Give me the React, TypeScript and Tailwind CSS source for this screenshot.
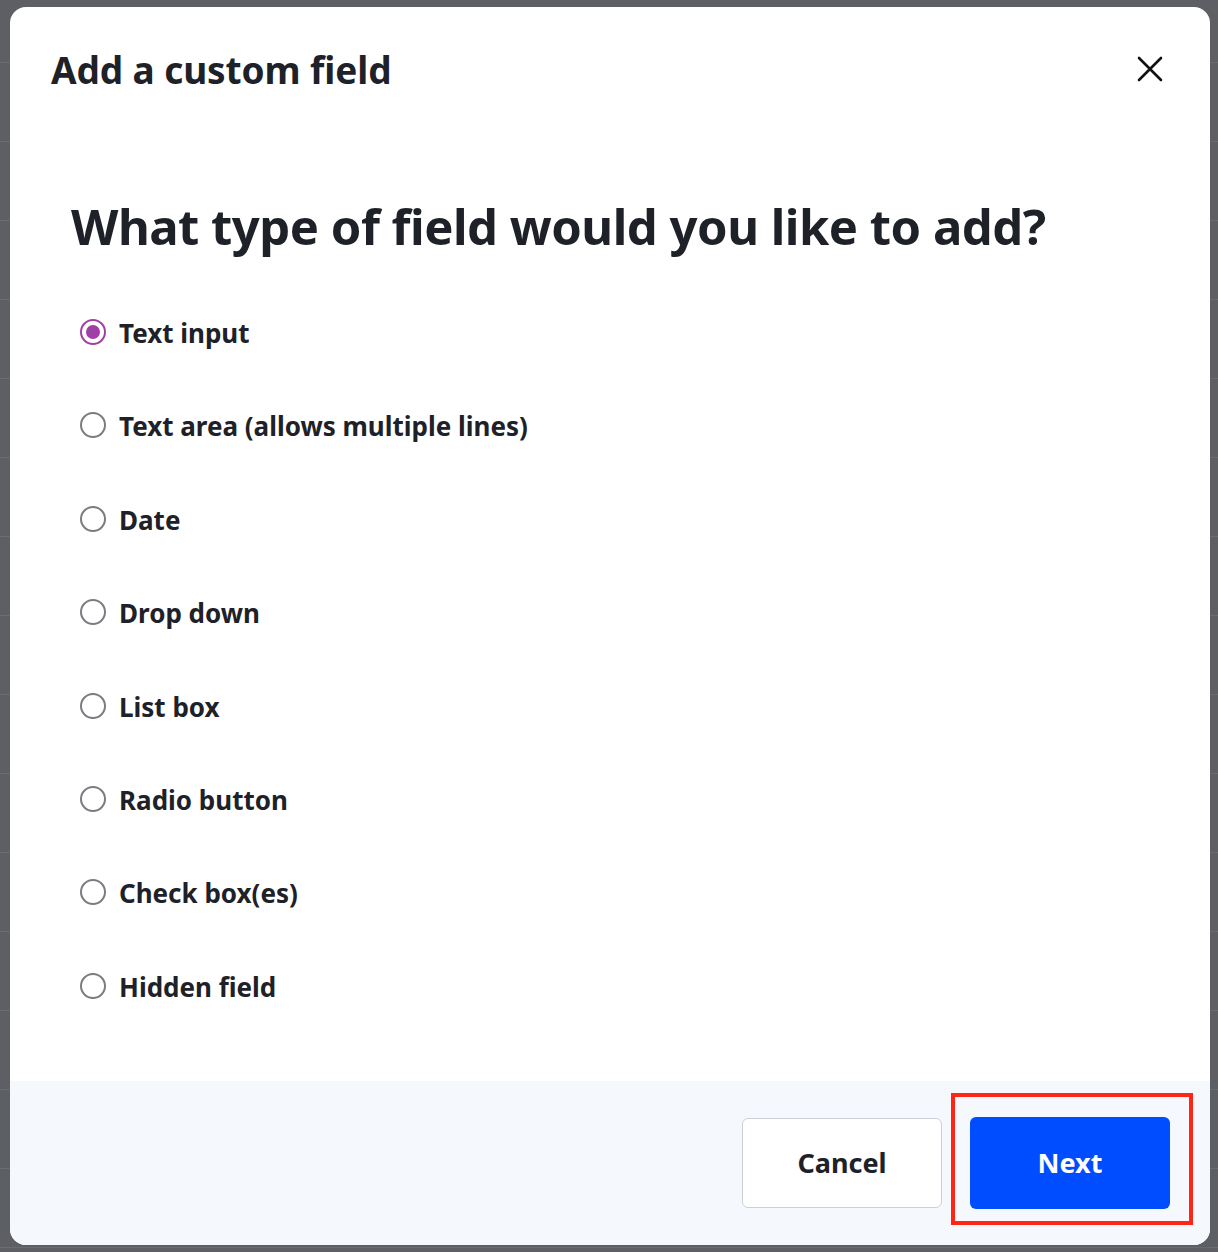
import React from "react";

const options = [
  "Text input",
  "Text area (allows multiple lines)",
  "Date",
  "Drop down",
  "List box",
  "Radio button",
  "Check box(es)",
  "Hidden field",
];

function Radio({ checked }: { checked: boolean }) {
  return checked ? (
    <span className="flex h-[26px] w-[26px] shrink-0 items-center justify-center rounded-full border-[2px] border-[#a03fa6] bg-white">
      <span className="block h-[14px] w-[14px] rounded-full bg-[#a03fa6]" />
    </span>
  ) : (
    <span className="block h-[26px] w-[26px] shrink-0 rounded-full border-[2px] border-[#7a7c81] bg-white" />
  );
}

export default function App() {
  const rows = Array.from({ length: 16 });
  return (
    <div
      className="relative h-[1252px] w-[1218px] overflow-hidden bg-[#5e5f64]"
      style={{ fontFamily: '"Noto Sans", "Open Sans", Arial, sans-serif' }}
    >
      <div className="pt-[62px]">
        {rows.map((_, i) => (
          <div key={i} className="h-[79px] border-t border-[#6b6c71]" />
        ))}
      </div>

      <div className="absolute left-[10px] top-[7px] flex h-[1238px] w-[1200px] flex-col overflow-hidden rounded-[16px] bg-white">
        <div className="flex items-center justify-between pl-[41px] pr-[46px] pt-[40px]">
          <h2 className="text-[37px] font-bold leading-[46px] tracking-[-0.1px] text-[#1e2128]">
            Add a custom field
          </h2>
          <svg width="28" height="28" viewBox="0 0 28 28" className="mt-[-2px]">
            <path d="M3 3 L25 25 M25 3 L3 25" stroke="#111" strokeWidth="2.6" strokeLinecap="round" />
          </svg>
        </div>

        <div className="flex-1 pl-[61px] pt-[101px]">
          <h1 className="text-[49px] font-bold leading-[64px] tracking-[-0.5px] text-[#1e2128]">
            What type of field would you like to add?
          </h1>
          <div className="mt-[59px] flex flex-col pl-[9px]">
            {options.map((o, i) => (
              <label key={o} className="flex h-[93.4px] items-start gap-[13px]">
                <span className="mt-[2px] block">
                  <Radio checked={i === 0} />
                </span>
                <span className="text-[26px] font-bold leading-[32px] text-[#1e2128]">{o}</span>
              </label>
            ))}
          </div>
        </div>

        <div className="relative flex h-[164px] items-center justify-end gap-[28px] bg-[#f5f8fc] pr-[40px]">
          <button className="h-[90px] w-[200px] rounded-[6px] border border-[#ccd0d6] bg-white text-[27px] font-bold text-[#1e2128]">
            Cancel
          </button>
          <button className="h-[92px] w-[200px] rounded-[6px] bg-[#004dff] text-[27px] font-bold text-white">
            Next
          </button>
          <div className="absolute left-[941px] top-[12px] h-[132px] w-[242px] border-[4px] border-[#ff2616]" />
        </div>
      </div>
    </div>
  );
}
